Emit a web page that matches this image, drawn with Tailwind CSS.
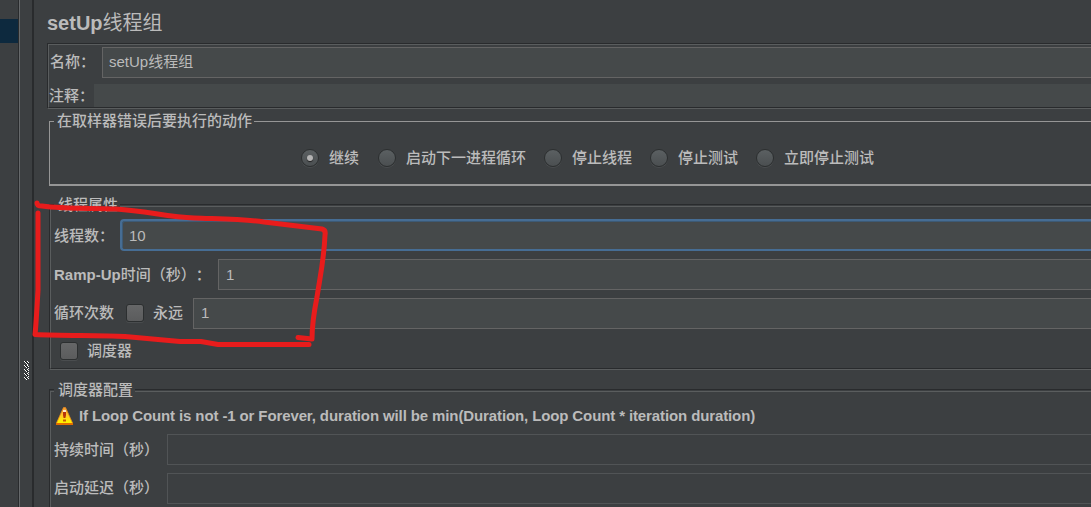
<!DOCTYPE html>
<html lang="zh-CN">
<head>
<meta charset="utf-8">
<title>setUp线程组</title>
<script src="https://cdn.jsdelivr.net/npm/@tailwindcss/browser@4"></script>
</head>
<body class="w-[1091px] h-[507px] overflow-hidden bg-[#3c3f41] text-[#bbbbbb] text-[15px] leading-5 whitespace-nowrap font-medium [text-spacing-trim:space-all] font-['Liberation_Sans','Noto_Sans_CJK_SC',sans-serif]">
<div class="relative flex w-full h-full overflow-hidden">
  <aside class="w-[18px] shrink-0 pt-[19px]"><div class="h-6 bg-[#0d293e]"></div></aside>
  <div class="w-4 shrink-0 border-l border-r-2 border-l-[#292b2d] border-r-[#292b2d] flex">
    <div class="w-px bg-[#66696b]"></div>
    <svg class="mt-[361px] ml-[4px] w-[6px] h-5" viewBox="0 0 6 20" shape-rendering="crispEdges">
      <path fill="#ffffff" d="M0 0h1v1H0zM3 0h1v1H3zM1 1h1v1H1zM4 1h1v1H4zM2 2h1v1H2zM3 3h1v1H3zM0 4h1v1H0zM3 4h1v1H3zM1 5h1v1H1zM4 5h1v1H4zM2 6h1v1H2zM4 7h1v1H4zM0 8h1v1H0zM3 8h1v1H3zM1 9h1v1H1zM4 9h1v1H4zM2 10h1v1H2zM4 11h1v1H4zM0 12h1v1H0zM3 12h1v1H3zM1 13h1v1H1zM4 13h1v1H4zM2 14h1v1H2zM4 15h1v1H4zM0 16h1v1H0zM3 16h1v1H3zM1 17h1v1H1zM4 17h1v1H4zM2 18h1v1H2z"/>
      <path fill="#17191a" d="M1 0h1v1H1zM2 1h1v1H2zM3 2h1v1H3zM1 4h1v1H1zM2 5h1v1H2zM3 6h1v1H3zM1 8h1v1H1zM2 9h1v1H2zM3 10h1v1H3zM1 12h1v1H1zM2 13h1v1H2zM3 14h1v1H3zM1 16h1v1H1zM2 17h1v1H2z"/>
    </svg>
  </div>
  <main class="flex-1 min-w-0 flex flex-col">
    <h1 class="h-[43px] shrink-0 pl-[13px] pt-[9px] text-[20px] leading-7"><span class="font-bold">setUp</span><span class="font-normal">线程组</span></h1>

    <section class="ml-[13px] h-[66px] shrink-0 border-y border-l border-t-[#292b2d] border-l-[#292b2d] border-b-[#5a5d5e]">
      <div class="h-full border-y border-l border-t-[#5a5d5e] border-l-[#5a5d5e] border-b-[#292b2d] pt-[2px] flex flex-col">
        <div class="flex h-[31px]">
          <label class="w-[53px] pl-px pt-[5px]">名称：</label>
          <div class="flex-1 border border-r-0 border-[#646464] bg-[#45494a] pl-[6px] pt-[4px] font-normal">setUp线程组</div>
        </div>
        <div class="flex h-[23px] mt-[6px]">
          <label class="w-[45px] pt-[2px]">注释：</label>
          <div class="flex-1 bg-[#45494a]"></div>
        </div>
      </div>
    </section>

    <section class="ml-[15px] mt-[2px] h-[75px] shrink-0 flex flex-col">
      <div class="flex h-5">
        <div class="mt-[10px] w-[5px] border-t border-l border-[#969696]"></div>
        <span class="pl-[3px] w-[200px]">在取样器错误后要执行的动作</span>
        <div class="mt-[10px] flex-1 border-t border-[#969696]"></div>
      </div>
      <div class="flex-1 border-l border-b-2 border-[#969696] pl-[251px] pt-[17px] flex">
        <div class="w-[77px] flex"><i class="size-[18px] mt-px mr-[10px] rounded-full border border-[#2c2f30] bg-linear-to-b from-[#5b6062] to-[#4b4f51] shadow-[0_1px_0_#4a4d4f] flex items-center justify-center"><b class="size-[6px] rounded-full bg-[#b4b4b4] shadow-[0_1px_1px_#202020]"></b></i><span>继续</span></div>
        <div class="w-[166px] flex"><i class="size-[18px] mt-px mr-[10px] rounded-full border border-[#2c2f30] bg-linear-to-b from-[#5b6062] to-[#4b4f51] shadow-[0_1px_0_#4a4d4f]"></i><span>启动下一进程循环</span></div>
        <div class="w-[106px] flex"><i class="size-[18px] mt-px mr-[10px] rounded-full border border-[#2c2f30] bg-linear-to-b from-[#5b6062] to-[#4b4f51] shadow-[0_1px_0_#4a4d4f]"></i><span>停止线程</span></div>
        <div class="w-[106px] flex"><i class="size-[18px] mt-px mr-[10px] rounded-full border border-[#2c2f30] bg-linear-to-b from-[#5b6062] to-[#4b4f51] shadow-[0_1px_0_#4a4d4f]"></i><span>停止测试</span></div>
        <div class="flex"><i class="size-[18px] mt-px mr-[10px] rounded-full border border-[#2c2f30] bg-linear-to-b from-[#5b6062] to-[#4b4f51] shadow-[0_1px_0_#4a4d4f]"></i><span>立即停止测试</span></div>
      </div>
    </section>

    <section class="ml-[15px] mt-[9px] h-[175px] shrink-0 flex flex-col">
      <div class="flex h-5 shrink-0">
        <div class="mt-[9px] w-[5px] border-t border-l border-[#292b2d]"><div class="h-full mt-px border-t border-l border-[#5a5d5e]"></div></div>
        <span class="pl-[4px] w-[66px]">线程属性</span>
        <div class="mt-[9px] flex-1 border-t border-[#292b2d]"><div class="mt-px border-t border-[#5a5d5e]"></div></div>
      </div>
      <div class="flex-1 border-l border-b border-l-[#292b2d] border-b-[#5a5d5e]">
        <div class="h-full border-l border-b border-l-[#5a5d5e] border-b-[#292b2d] pt-[4px]">
          <div class="flex h-[32px]">
            <label class="w-[69px] pl-[3px] pt-[7px]">线程数：</label>
            <div class="flex-1 border-2 border-r-0 border-[#466d94] rounded-l-[4px] bg-[#45494a] shadow-[inset_1px_1px_0_#3d5a75] pl-[7px] pt-[5px] font-normal">10</div>
          </div>
          <div class="flex h-[31px] mt-[8px]">
            <label class="w-[167px] pl-[3px] pt-[6px]"><span class="font-bold">Ramp-Up</span>时间（秒）：</label>
            <div class="flex-1 border border-r-0 border-[#646464] bg-[#45494a] pl-[7px] pt-[5px] font-normal">1</div>
          </div>
          <div class="flex h-[31px] mt-[8px]">
            <label class="w-[75px] pl-[3px] pt-[5px]">循环次数</label>
            <i class="size-[18px] mt-[6px] rounded-[3px] border border-[#2c2f30] bg-linear-to-b from-[#666768] to-[#5b5c5d] shadow-[0_1px_0_#4a4d4f]"></i>
            <label class="w-[49px] pl-[9px] pt-[5px]">永远</label>
            <div class="flex-1 border border-r-0 border-[#646464] bg-[#45494a] pl-[7px] pt-[4px] font-normal">1</div>
          </div>
          <div class="flex mt-[12px] pl-[9px]">
            <i class="size-[18px] mt-px rounded-[3px] border border-[#2c2f30] bg-linear-to-b from-[#666768] to-[#5b5c5d] shadow-[0_1px_0_#4a4d4f]"></i>
            <label class="pl-[9px]">调度器</label>
          </div>
        </div>
      </div>
    </section>

    <section class="ml-[15px] mt-[10px] h-[175px] shrink-0 flex flex-col">
      <div class="flex h-5 shrink-0">
        <div class="mt-[9px] w-[5px] border-t border-l border-[#292b2d]"><div class="h-full mt-px border-t border-l border-[#5a5d5e]"></div></div>
        <span class="pl-[4px] w-[81px]">调度器配置</span>
        <div class="mt-[9px] flex-1 border-t border-[#292b2d]"><div class="mt-px border-t border-[#5a5d5e]"></div></div>
      </div>
      <div class="flex-1 border-l border-[#292b2d]">
        <div class="h-full border-l border-[#5a5d5e] pt-[6px]">
          <div class="flex h-5 pl-[5px] font-bold">
            <svg class="w-[17px] h-[18px] mt-px mr-[6px]" viewBox="0 0 17 18">
              <defs><linearGradient id="w" x1="0" y1="0" x2="0" y2="1"><stop offset="0" stop-color="#f59a38"/><stop offset=".45" stop-color="#ffc928"/><stop offset=".8" stop-color="#fff000"/></linearGradient></defs>
              <path d="M7.500.500h2L16.500 16v2H.500v-2z" fill="url(#w)" stroke="#e9891c" stroke-width=".8"/>
              <path d="M0 16h17v2H0z" fill="#e06c00"/>
              <path d="M7 5h3v3l-.6 3H7.600L7 8z" fill="#b5330a"/><path d="M7 12.500h3v2H7z" fill="#c65b08"/>
              <path d="M7 3h3v2H7z" fill="#ffe9c8"/>
            </svg>
            <span class="tracking-[-0.115px]">If Loop Count is not -1 or Forever, duration will be min(Duration, Loop Count * iteration duration)</span>
          </div>
          <div class="flex h-[31px] mt-[8px]">
            <label class="w-[116px] pl-[3px] pt-[6px]">持续时间（秒）</label>
            <div class="flex-1 border border-r-0 border-[#515456]"></div>
          </div>
          <div class="flex h-[31px] mt-[8px]">
            <label class="w-[116px] pl-[3px] pt-[5px]">启动延迟（秒）</label>
            <div class="flex-1 border border-r-0 border-[#515456]"></div>
          </div>
        </div>
      </div>
    </section>
  </main>
  <svg class="absolute inset-0 w-full h-full pointer-events-none" viewBox="0 0 1091 507" fill="none" stroke="#e81c1c" stroke-width="5" stroke-linecap="round" stroke-linejoin="round">
    <path d="M37 203Q37 206 42 206C65 209 89 208 116 209C147 211 168 217 194 218C220 219 244 219 264 222L322 229Q326 230 325 235C324 260 320 277 317 297C314 312 312 324 312 339L298 337.500"/>
    <path d="M38 213V290C37 308 36 326 35 334.500C65 336 98 335 125 336.500L180 341.500H201L218 344.500H309"/>
  </svg>
</div>
</body>
</html>
